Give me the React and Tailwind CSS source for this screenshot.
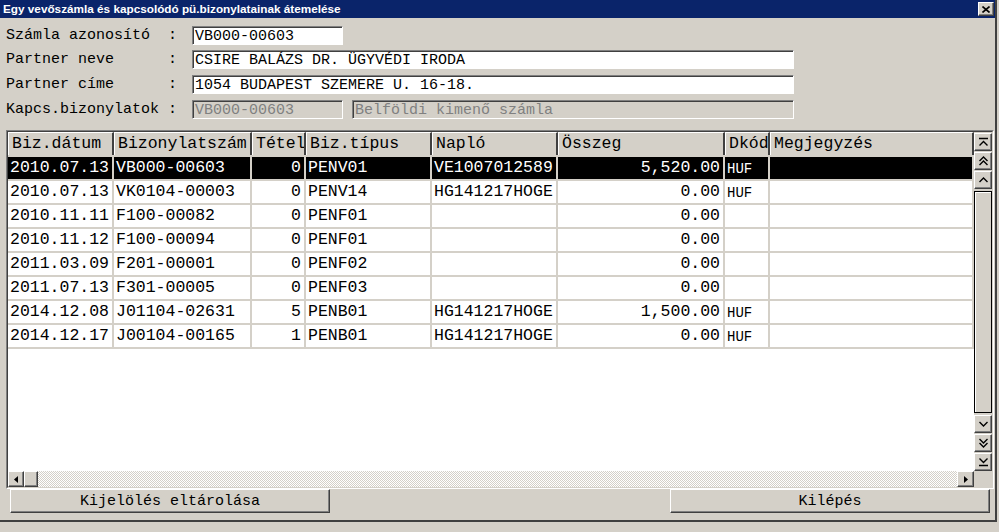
import React from 'react';

const cols = [
    { key: 'date', title: 'Biz.dátum', w: 'w-[106px]' },
    { key: 'num', title: 'Bizonylatszám', w: 'w-[138px]' },
    { key: 'item', title: 'Tétel', w: 'w-[54px]', right: true },
    { key: 'type', title: 'Biz.típus', w: 'w-[126px]' },
    { key: 'journal', title: 'Napló', w: 'w-[126px]' },
    { key: 'amount', title: 'Összeg', w: 'w-[167px]', right: true },
    { key: 'cur', title: 'Dkód', w: 'w-[45px]' },
    { key: 'note', title: 'Megjegyzés', w: 'w-[204px]' },
];

const rows = [
    ['2010.07.13', 'VB000-00603', '0', 'PENV01', 'VE1007012589', '5,520.00', 'HUF', ''],
    ['2010.07.13', 'VK0104-00003', '0', 'PENV14', 'HG141217HOGE', '0.00', 'HUF', ''],
    ['2010.11.11', 'F100-00082', '0', 'PENF01', '', '0.00', '', ''],
    ['2010.11.12', 'F100-00094', '0', 'PENF01', '', '0.00', '', ''],
    ['2011.03.09', 'F201-00001', '0', 'PENF02', '', '0.00', '', ''],
    ['2011.07.13', 'F301-00005', '0', 'PENF03', '', '0.00', '', ''],
    ['2014.12.08', 'J01104-02631', '5', 'PENB01', 'HG141217HOGE', '1,500.00', 'HUF', ''],
    ['2014.12.17', 'J00104-00165', '1', 'PENB01', 'HG141217HOGE', '0.00', 'HUF', ''],
];

const raised = 'bg-[#d4d0c8] border-t border-l border-t-white border-l-white border-b border-r border-b-[#404040] border-r-[#404040] shadow-[inset_-1px_-1px_0_#808080]';

function ScrollIcon({ d }) {
    return (
        <svg width="11" height="10" viewBox="0 0 11 10" fill="none" stroke="black" strokeWidth="1.4">
            <path d={d} />
        </svg>
    );
}

function ScrollBtn({ d }) {
    return (
        <div className={`h-[18px] flex items-center justify-center ${raised}`}>
            <ScrollIcon d={d} />
        </div>
    );
}

function Field({ label, children }) {
    return (
        <div className="flex items-center h-[19px]">
            <span className="w-[162px] whitespace-pre">{label}</span>
            <span className="w-[24px]">:</span>
            {children}
        </div>
    );
}

function Box({ w, value, disabled, className = '' }) {
    return (
        <div className={`${w} h-[19px] flex items-center pl-[1px] border border-t-[#808080] border-l-[#808080] border-b-white border-r-white shadow-[inset_1px_1px_0_#404040] whitespace-nowrap ${disabled ? 'bg-[#d4d0c8] text-[#808080]' : 'bg-white text-black'} ${className}`}>
            <span className="pl-[1px] pt-[1px]">{value}</span>
        </div>
    );
}

export default function App() {
    return (
        <div className="w-[999px] h-[532px] bg-[#d4d0c8] overflow-hidden font-['Liberation_Mono',monospace] text-black">
            <div className="w-[997px] h-[522px] border-r-2 border-b-2 border-[#404040] flex flex-col">
                {/* TITLE BAR */}
                <div className="h-[18px] bg-[#0a246a] flex items-center justify-between pl-[3px] pr-[1px]">
                    <span className="text-white font-bold text-[11.75px] font-['Liberation_Sans',sans-serif] leading-none">
                        Egy vevőszámla és kapcsolódó pü.bizonylatainak átemelése
                    </span>
                    <div className={`w-[16px] h-[14px] flex items-center justify-center ${raised}`}>
                        <svg width="8" height="7" viewBox="0 0 8 7" stroke="black" strokeWidth="1.6">
                            <path d="M0.5 0.5L7.5 6.5M7.5 0.5L0.5 6.5" />
                        </svg>
                    </div>
                </div>

                {/* FORM */}
                <div className="pt-[8px] pl-[6px] text-[15px] leading-none">
                    <Field label="Számla azonosító">
                        <Box w="w-[151px]" value="VB000-00603" />
                    </Field>
                    <div className="mt-[5px]">
                        <Field label="Partner neve">
                            <Box w="w-[602px]" value="CSIRE BALÁZS DR. ÜGYVÉDI IRODA" />
                        </Field>
                    </div>
                    <div className="mt-[6px]">
                        <Field label="Partner címe">
                            <Box w="w-[602px]" value="1054 BUDAPEST SZEMERE U. 16-18." />
                        </Field>
                    </div>
                    <div className="mt-[6px]">
                        <Field label="Kapcs.bizonylatok">
                            <Box w="w-[151px]" value="VB000-00603" disabled />
                            <Box w="w-[442px]" value="Belföldi kimenő számla" disabled className="ml-[9px]" />
                        </Field>
                    </div>
                </div>

                {/* GRID FRAME */}
                <div className="mt-[11px] ml-[6px] w-[988px] h-[359px] border border-t-[#808080] border-l-[#808080] border-b-white border-r-white">
                    <div className="w-full h-full border border-t-[#404040] border-l-[#404040] border-b-[#d4d0c8] border-r-[#d4d0c8] flex flex-col">
                        <div className="flex h-[339px]">
                            <div className="w-[966px] bg-white text-[16.5px] leading-none">
                                <div className="flex h-[25px] border-b-2 border-[#d4d0c8]">
                                    {cols.map((c) => (
                                        <div key={c.key} className={`${c.w} shrink-0 flex items-center pl-[3px] pt-[1px] bg-[#d4d0c8] border-t border-l border-t-white border-l-white border-r-2 border-r-[#404040] whitespace-nowrap overflow-hidden`}>
                                            {c.title}
                                        </div>
                                    ))}
                                </div>
                                {rows.map((r, i) => (
                                    <div key={i} className={`flex h-[24px] border-b-2 border-[#d4d0c8] ${i === 0 ? 'text-white' : ''}`}>
                                        {cols.map((c, j) => (
                                            <div key={c.key} className={`${c.w} shrink-0 flex items-center pt-[1px] border-r-2 border-[#d4d0c8] whitespace-nowrap overflow-hidden ${c.right ? 'justify-end pr-[3px]' : 'pl-[2px]'} ${i === 0 ? 'bg-black' : ''} ${c.key === 'cur' ? 'text-[14px]' : ''}`}>
                                                {r[j]}
                                            </div>
                                        ))}
                                    </div>
                                ))}
                            </div>

                            {/* VERTICAL SCROLLBAR */}
                            <div className="w-[18px] flex flex-col gap-[1px] pt-[1px] bg-[#d4d0c8]">
                                <ScrollBtn d="M1 1.5H10M1.5 8.5L5.5 4.5L9.5 8.5" />
                                <ScrollBtn d="M1.5 5L5.5 1L9.5 5M1.5 9L5.5 5L9.5 9" />
                                <ScrollBtn d="M1.5 7L5.5 3L9.5 7" />
                                <div className="flex-1 my-[1px] bg-[#d4d0c8] border border-black shadow-[inset_1px_1px_0_#fff]" />
                                <ScrollBtn d="M1.5 3L5.5 7L9.5 3" />
                                <ScrollBtn d="M1.5 1L5.5 5L9.5 1M1.5 5L5.5 9L9.5 5" />
                                <ScrollBtn d="M1.5 1.5L5.5 5.5L9.5 1.5M1 8.5H10" />
                            </div>
                        </div>

                        {/* HORIZONTAL SCROLLBAR */}
                        <div className="flex h-[16px]">
                            <div className={`w-[16px] flex items-center justify-center ${raised}`}>
                                <svg width="4" height="7" viewBox="0 0 4 7"><path d="M4 0L0 3.5L4 7Z" fill="black" /></svg>
                            </div>
                            <div className={`w-[14px] ${raised}`} />
                            <div className="flex-1 bg-[repeating-conic-gradient(#d4d0c8_0_25%,#ffffff_0_50%)] bg-[length:2px_2px]" />
                            <div className={`w-[17px] flex items-center justify-center ${raised}`}>
                                <svg width="4" height="7" viewBox="0 0 4 7"><path d="M0 0L4 3.5L0 7Z" fill="black" /></svg>
                            </div>
                            <div className="w-[18px] bg-[#d4d0c8]" />
                        </div>
                    </div>
                </div>

                {/* BUTTONS */}
                <div className="flex justify-between pl-[10px] pr-[5px] text-[15px] leading-none">
                    <div className={`w-[320px] h-[24px] flex items-center justify-center ${raised}`}>Kijelölés eltárolása</div>
                    <div className={`w-[320px] h-[24px] flex items-center justify-center ${raised}`}>Kilépés</div>
                </div>
            </div>
        </div>
    );
}
